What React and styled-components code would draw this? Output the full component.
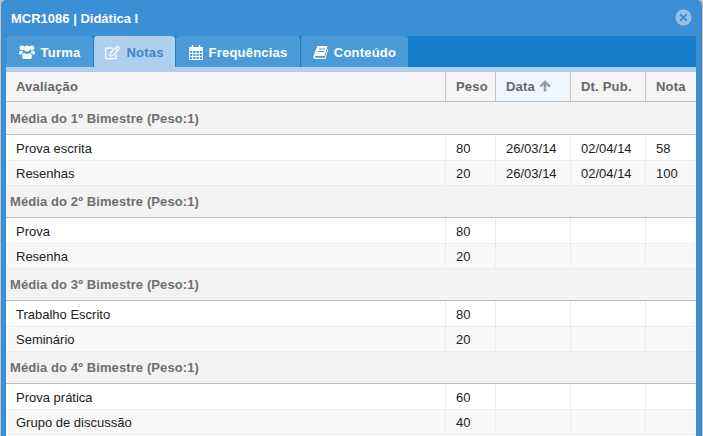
import React from "react";
import styled, { createGlobalStyle } from "styled-components";
import { FaRegEdit, FaArrowUp } from "react-icons/fa";

const GlobalStyle = createGlobalStyle`
  html, body { margin: 0; padding: 0; background: #c4c4c4; overflow: hidden; }
  body { font-family: "Liberation Sans", Arial, sans-serif; }
`;

const Modal = styled.div`
  width: 701px;
  height: 436px;
  margin-left: 1px;
  background: #3b8fd5;
  border-radius: 5px 5px 0 0;
  padding: 0 6px 0 5px;
  box-sizing: border-box;
  overflow: hidden;
  display: flex;
  flex-direction: column;
`;

const TitleBar = styled.div`
  height: 36px;
  flex: none;
  display: flex;
  align-items: center;
  justify-content: space-between;
  color: #fff;
  font-size: 13px;
  font-weight: bold;
  padding: 1px 5px 0 5px;
  box-sizing: border-box;
  svg { margin-top: -2px; margin-right: -1px; }
`;

const TabBar = styled.div`
  height: 31px;
  flex: none;
  background: #157dcb;
  display: flex;
  align-items: flex-end;
`;

const Tab = styled.div`
  height: 31px;
  width: ${(p) => p.$w}px;
  margin-right: 1px;
  padding-top: 1px;
  box-sizing: border-box;
  border-radius: 3px 3px 0 0;
  background: ${(p) => (p.$active ? "#aed0ee" : "#4b9ad8")};
  color: ${(p) => (p.$active ? "#3a86cf" : "#fff")};
  display: flex;
  align-items: center;
  justify-content: center;
  gap: 6px;
  font-size: 13px;
  font-weight: bold;
  letter-spacing: 0.2px;
  svg { color: #fff; flex: none; }
`;

const Strip = styled.div`
  height: 5px;
  flex: none;
  background: #aed0ee;
`;

const Panel = styled.div`
  flex: 1;
  background: #fff;
`;

const Table = styled.table`
  width: 690px;
  table-layout: fixed;
  border-collapse: separate;
  border-spacing: 0;
  font-size: 13px;
  color: #222;
`;

const HeadCell = styled.th`
  height: 30px;
  padding: 0 0 0 10px;
  box-sizing: border-box;
  text-align: left;
  font-size: 13px;
  font-weight: bold;
  letter-spacing: 0.2px;
  color: #666;
  background: ${(p) => (p.$sorted ? "#eff6fd" : "#f5f5f5")};
  border-bottom: 1px solid #bdbdbd;
  border-left: ${(p) => (p.$first ? "none" : "1px solid #c4c4c4")};
  svg { font-size: 12px; margin-left: 4px; color: #999; vertical-align: -1px; stroke: #999; stroke-width: 30px; }
`;

const GroupCell = styled.td`
  height: ${(p) => (p.$first ? 33 : 32)}px;
  padding: 0 0 0 4px;
  box-sizing: border-box;
  background: #f3f3f3;
  border-bottom: 1px solid #bdbdbd;
  font-size: 13px;
  font-weight: bold;
  letter-spacing: 0.1px;
  color: #6f6f6f;
`;

const Row = styled.tr`
  background: ${(p) => (p.$alt ? "#f8f8f8" : "#fff")};
`;

const Cell = styled.td`
  height: ${(p) => (p.$alt ? 25 : 26)}px;
  padding: ${(p) => (p.$alt ? 0 : 1)}px 0 0 10px;
  box-sizing: border-box;
  border-bottom: 1px solid #ececec;
  border-left: ${(p) => (p.$first ? "none" : "1px solid #ececec")};
  white-space: nowrap;
`;

const groups = [
  {
    name: "Média do 1º Bimestre (Peso:1)",
    rows: [
      ["Prova escrita", "80", "26/03/14", "02/04/14", "58"],
      ["Resenhas", "20", "26/03/14", "02/04/14", "100"],
    ],
  },
  {
    name: "Média do 2º Bimestre (Peso:1)",
    rows: [
      ["Prova", "80", "", "", ""],
      ["Resenha", "20", "", "", ""],
    ],
  },
  {
    name: "Média do 3º Bimestre (Peso:1)",
    rows: [
      ["Trabalho Escrito", "80", "", "", ""],
      ["Seminário", "20", "", "", ""],
    ],
  },
  {
    name: "Média do 4º Bimestre (Peso:1)",
    rows: [
      ["Prova prática", "60", "", "", ""],
      ["Grupo de discussão", "40", "", "", ""],
    ],
  },
];

const CloseIcon = () => (
  <svg width="17" height="17" viewBox="0 0 17 17">
    <circle cx="8.5" cy="8.5" r="8" fill="#93c2e9" />
    <path d="M5.2 5.2l6.6 6.6M11.8 5.2l-6.6 6.6" stroke="#3b8fd5" strokeWidth="2" />
  </svg>
);

const UsersIcon = () => (
  <svg width="16" height="14" viewBox="0 0 16 14" fill="currentColor">
    <circle cx="3" cy="3" r="2.4" />
    <circle cx="13" cy="3" r="2.4" />
    <circle cx="8" cy="3.6" r="3" />
    <path d="M0 9.5V7.6C0 6.6.8 6 1.6 6h2.2c-.3 1-.1 1.6.2 2-.9.4-1.5 1-1.8 1.5H0zM16 9.5V7.6c0-1-.8-1.6-1.6-1.6h-2.2c.3 1 .1 1.6-.2 2 .9.4 1.5 1 1.8 1.5H16z" />
    <path d="M3.2 12.6v-2.2c0-1.5 1-2.4 2.2-2.4.7.6 1.6 1 2.6 1s1.9-.4 2.6-1c1.2 0 2.2.9 2.2 2.4v2.2c0 .8-.6 1.4-1.4 1.4H4.6c-.8 0-1.4-.6-1.4-1.4z" />
  </svg>
);

const CalendarIcon = () => (
  <svg width="14" height="15" viewBox="0 0 14 15" fill="none" stroke="currentColor" strokeWidth="1">
    <rect x="0.5" y="2.5" width="13" height="12" />
    <rect x="0.5" y="2.5" width="13" height="3" fill="currentColor" />
    <path d="M3.5 0v4M10.5 0v4" strokeWidth="1.6" />
    <path d="M0 8.5h14M0 11.5h14M3.75 5v10M7 5v10M10.25 5v10" />
  </svg>
);

const BookIcon = () => (
  <svg width="15" height="15" viewBox="0 0 15 14">
    <path
      fill="currentColor"
      d="M4.5.5H14.5L11.5 10.5H3C1.8 10.5 1.6 12.2 3 12.2H12L14.4 3.5L15 4L12.5 13.5H2.5C.5 13.5 0 11.5.6 10Z"
    />
    <path d="M6 3.5h6M5.2 6h6" stroke="#4b9ad8" strokeWidth="1" />
  </svg>
);

export default function App() {
  return (
    <>
      <GlobalStyle />
      <Modal>
        <TitleBar>
          <span>MCR1086 | Didática I</span>
          <CloseIcon />
        </TitleBar>
        <TabBar>
          <Tab $w={87}><UsersIcon />Turma</Tab>
          <Tab $w={81} $active><FaRegEdit size={15} />Notas</Tab>
          <Tab $w={124}><CalendarIcon />Frequências</Tab>
          <Tab $w={107}><BookIcon />Conteúdo</Tab>
        </TabBar>
        <Strip />
        <Panel>
          <Table>
            <colgroup>
              <col style={{ width: 439 }} />
              <col style={{ width: 50 }} />
              <col style={{ width: 75 }} />
              <col style={{ width: 75 }} />
              <col style={{ width: 51 }} />
            </colgroup>
            <thead>
              <tr>
                <HeadCell $first>Avaliação</HeadCell>
                <HeadCell>Peso</HeadCell>
                <HeadCell $sorted>Data<FaArrowUp /></HeadCell>
                <HeadCell>Dt. Pub.</HeadCell>
                <HeadCell>Nota</HeadCell>
              </tr>
            </thead>
            <tbody>
              {groups.map((g, n) => (
                <React.Fragment key={g.name}>
                  <tr><GroupCell colSpan={5} $first={n === 0}>{g.name}</GroupCell></tr>
                  {g.rows.map((r, i) => (
                    <Row key={r[0]} $alt={i === 1}>
                      {r.map((c, j) => (
                        <Cell key={j} $first={j === 0} $alt={i === 1}>{c}</Cell>
                      ))}
                    </Row>
                  ))}
                </React.Fragment>
              ))}
            </tbody>
          </Table>
        </Panel>
      </Modal>
    </>
  );
}
